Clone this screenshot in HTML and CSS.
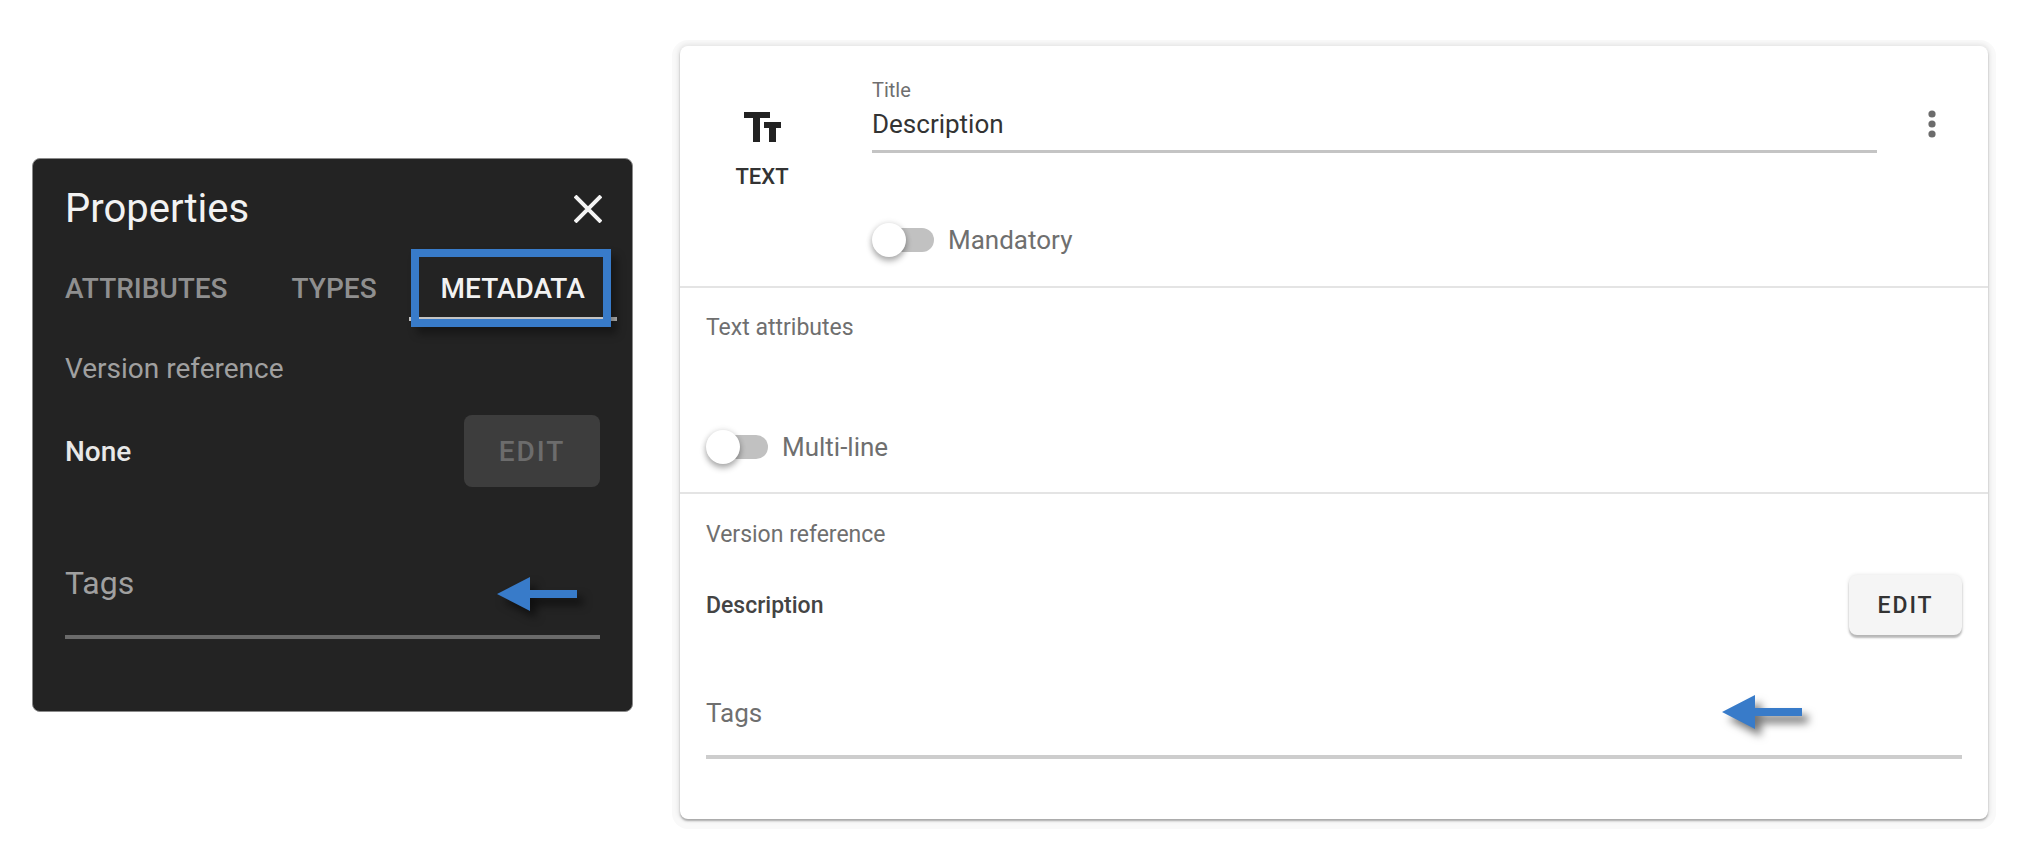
FILE: index.html
```html
<!DOCTYPE html>
<html lang="en">
<head>
    <meta charset="UTF-8">
    <meta name="viewport" content="width=device-width, initial-scale=1.0">
    <title>Properties | Metadata</title>
    <link rel="stylesheet" href="styles.css">
</head>
<body>
    <aside class="panel">
        <header class="panel-head">
            <h1>Properties</h1>
            <button class="icon-btn" type="button" aria-label="Close">
                <svg width="28" height="28" viewBox="0 0 28 28"><path d="M1 1L27 27M27 1L1 27" stroke="#f4f4f4" stroke-width="4"/></svg>
            </button>
        </header>
        <nav class="tabs" role="tablist">
            <button class="tab" type="button" role="tab">ATTRIBUTES</button>
            <button class="tab" type="button" role="tab">TYPES</button>
            <button class="tab active" type="button" role="tab" aria-selected="true">METADATA<span class="highlight"></span></button>
        </nav>
        <h2>Version reference</h2>
        <div class="row">
            <span class="value">None</span>
            <button class="btn" type="button" disabled>EDIT</button>
        </div>
        <div class="tags">
            <label for="panel-tags">Tags</label>
            <input id="panel-tags" type="text">
            <svg class="arrow" width="80" height="34" viewBox="0 0 80 34"><path d="M0 17L33 0V13H80V21H33V34Z" fill="#387bc9"/></svg>
        </div>
    </aside>

    <main class="card">
        <section class="main-info">
            <div class="kind">
                <svg width="37" height="30" viewBox="0 0 37 30"><path d="M0 0H26V6H16V30H9V6H0ZM20 10H37V16H32V30H25V16H20Z" fill="#222"/></svg>
                <span>TEXT</span>
            </div>
            <div class="fields">
                <label class="small" for="title">Title</label>
                <input class="title" id="title" type="text" value="Description">
                <label class="toggle"><input type="checkbox">Mandatory</label>
            </div>
            <button class="icon-btn menu" type="button" aria-label="More">
                <svg width="8" height="28" viewBox="0 0 8 28" fill="#6c6c6c"><circle cx="4" cy="4" r="3.6"/><circle cx="4" cy="14" r="3.6"/><circle cx="4" cy="24" r="3.6"/></svg>
            </button>
        </section>
        <section class="attributes">
            <h2>Text attributes</h2>
            <label class="toggle"><input type="checkbox">Multi-line</label>
        </section>
        <section class="reference">
            <h2>Version reference</h2>
            <div class="row">
                <span class="value">Description</span>
                <button class="btn" type="button">EDIT</button>
            </div>
            <div class="tags">
                <label for="card-tags">Tags</label>
                <input id="card-tags" type="text">
                <svg class="arrow" width="80" height="34" viewBox="0 0 80 34"><path d="M0 17L33 0V13H80V21H33V34Z" fill="#387bc9"/></svg>
            </div>
        </section>
    </main>
</body>
</html>
```
FILE: styles.css
```css
*{box-sizing: border-box;}
body{
    margin: 0;
    padding: 46px 42px 40px 32px;
    display: flex;
    align-items: flex-start;
    gap: 47px;
    background: #fff;
    font-family: Roboto, "Liberation Sans", sans-serif;
}
h1,h2{margin: 0;font-weight: 400;}
button,input{font-family: inherit;border: 0;padding: 0;background: none;}
input{outline: 0;border-radius: 0;}
svg{display: block;}
.icon-btn{cursor: pointer;}
.row{display: flex;justify-content: space-between;align-items: center;}
.value{font-weight: 500;}
.btn{font-weight: 500;border-radius: 8px;}
.tags{position: relative;display: flex;flex-direction: column;}
.arrow{position: absolute;overflow: visible;filter: drop-shadow(6px 7px 4px rgba(0,0,0,.55));}

/* dark panel */
.panel{
    flex: 0 0 601px;
    margin-top: 112px;
    padding: 26px 32px 72px;
    border: 1px solid #8a8a8a;
    border-radius: 8px;
    background: #232323;
    color: #a0a0a0;
}
.panel-head{display: flex;justify-content: space-between;align-items: center;height: 48px;}
.panel h1{font-size: 40px;line-height: 48px;color: #f2f2f2;}
.panel .icon-btn{margin-right: -2px;}
.tabs{display: flex;margin: 16px -32px 0;height: 72px;}
.tab{
    position: relative;
    padding: 10px 32px 0;
    font-size: 28px;
    font-weight: 500;
    color: #8f8f8f;
    border-bottom: 4px solid transparent;
}
.tab.active{color: #f2f2f2;border-bottom-color: #c4c4c4;}
.highlight{
    position: absolute;
    inset: 0 6px -10px 2px;
    border: 8px solid #387bc9;
    box-shadow: 6px 7px 8px rgba(0,0,0,.35);
}
.panel h2{margin-top: 32px;font-size: 28px;line-height: 32px;}
.panel .row{margin-top: 30px;font-size: 28px;}
.panel .value{color: #e8e8e8;}
.panel .btn{width: 136px;height: 72px;font-size: 28px;letter-spacing: 2px;background: #3d3d3d;color: #6c6c6c;}
.panel .tags{margin-top: 76px;font-size: 32px;line-height: 40px;}
.panel .tags input{height: 36px;border-bottom: 4px solid #6a6a6a;}
.panel .arrow{right: 23px;top: 14px;}

/* card */
.card{
    flex: 1;
    border-radius: 8px;
    color: #6f6f6f;
    box-shadow: 0 2px 2px rgba(0,0,0,.28), 0 0 4px 2px rgba(0,0,0,.08), 0 2px 0 8px #f9f9f9;
}
.card section{padding: 0 26px;border-bottom: 2px solid #e4e4e4;}
.card section:last-child{border-bottom: 0;}
.card h2{font-size: 23px;line-height: 32px;}
.card .main-info{display: flex;align-items: flex-start;height: 242px;padding-left: 0;}
.kind{
    flex: 0 0 192px;
    display: flex;
    flex-direction: column;
    align-items: center;
    gap: 23px;
    margin-top: 66px;
    padding-right: 28px;
    font-size: 22px;
    line-height: 24px;
    font-weight: 500;
    color: #333;
}
.fields{flex: 1;display: flex;flex-direction: column;}
.small{margin-top: 32px;font-size: 20px;line-height: 24px;}
.title{height: 51px;padding-bottom: 4px;font-size: 26px;color: #333;border-bottom: 3px solid #c4c4c4;}
.menu{margin: 64px 26px 0 51px;}
.toggle{display: flex;align-items: center;gap: 14px;height: 34px;font-size: 26px;}
.fields .toggle{margin-top: 70px;}
.toggle input{
    appearance: none;
    display: flex;
    align-items: center;
    width: 54px;
    height: 24px;
    margin: 0 0 0 8px;
    border-radius: 12px;
    background: #c1c1c1;
}
.toggle input::before{
    content: "";
    width: 34px;
    height: 34px;
    flex: none;
    margin-left: -8px;
    border-radius: 50%;
    background: #fff;
    box-shadow: 0 4px 6px rgba(0,0,0,.3), 0 0 6px rgba(0,0,0,.12);
}
.card .attributes{height: 206px;padding-top: 24px;}
.attributes .toggle{margin-top: 86px;}
.card .reference{padding-top: 25px;padding-bottom: 60px;}
.card .row{margin-top: 24px;font-size: 23px;}
.card .value{color: #444;}
.card .btn{
    width: 113px;
    height: 60px;
    font-size: 23px;
    letter-spacing: 2px;
    background: #f5f5f5;
    color: #333;
    box-shadow: 0 3px 2px rgba(0,0,0,.25), 0 0 4px rgba(0,0,0,.12);
}
.card .tags{margin-top: 62px;font-size: 26px;line-height: 32px;}
.card .tags input{height: 30px;border-bottom: 4px solid #cdcdcd;}
.card .arrow{right: 160px;top: -2px;}
```
